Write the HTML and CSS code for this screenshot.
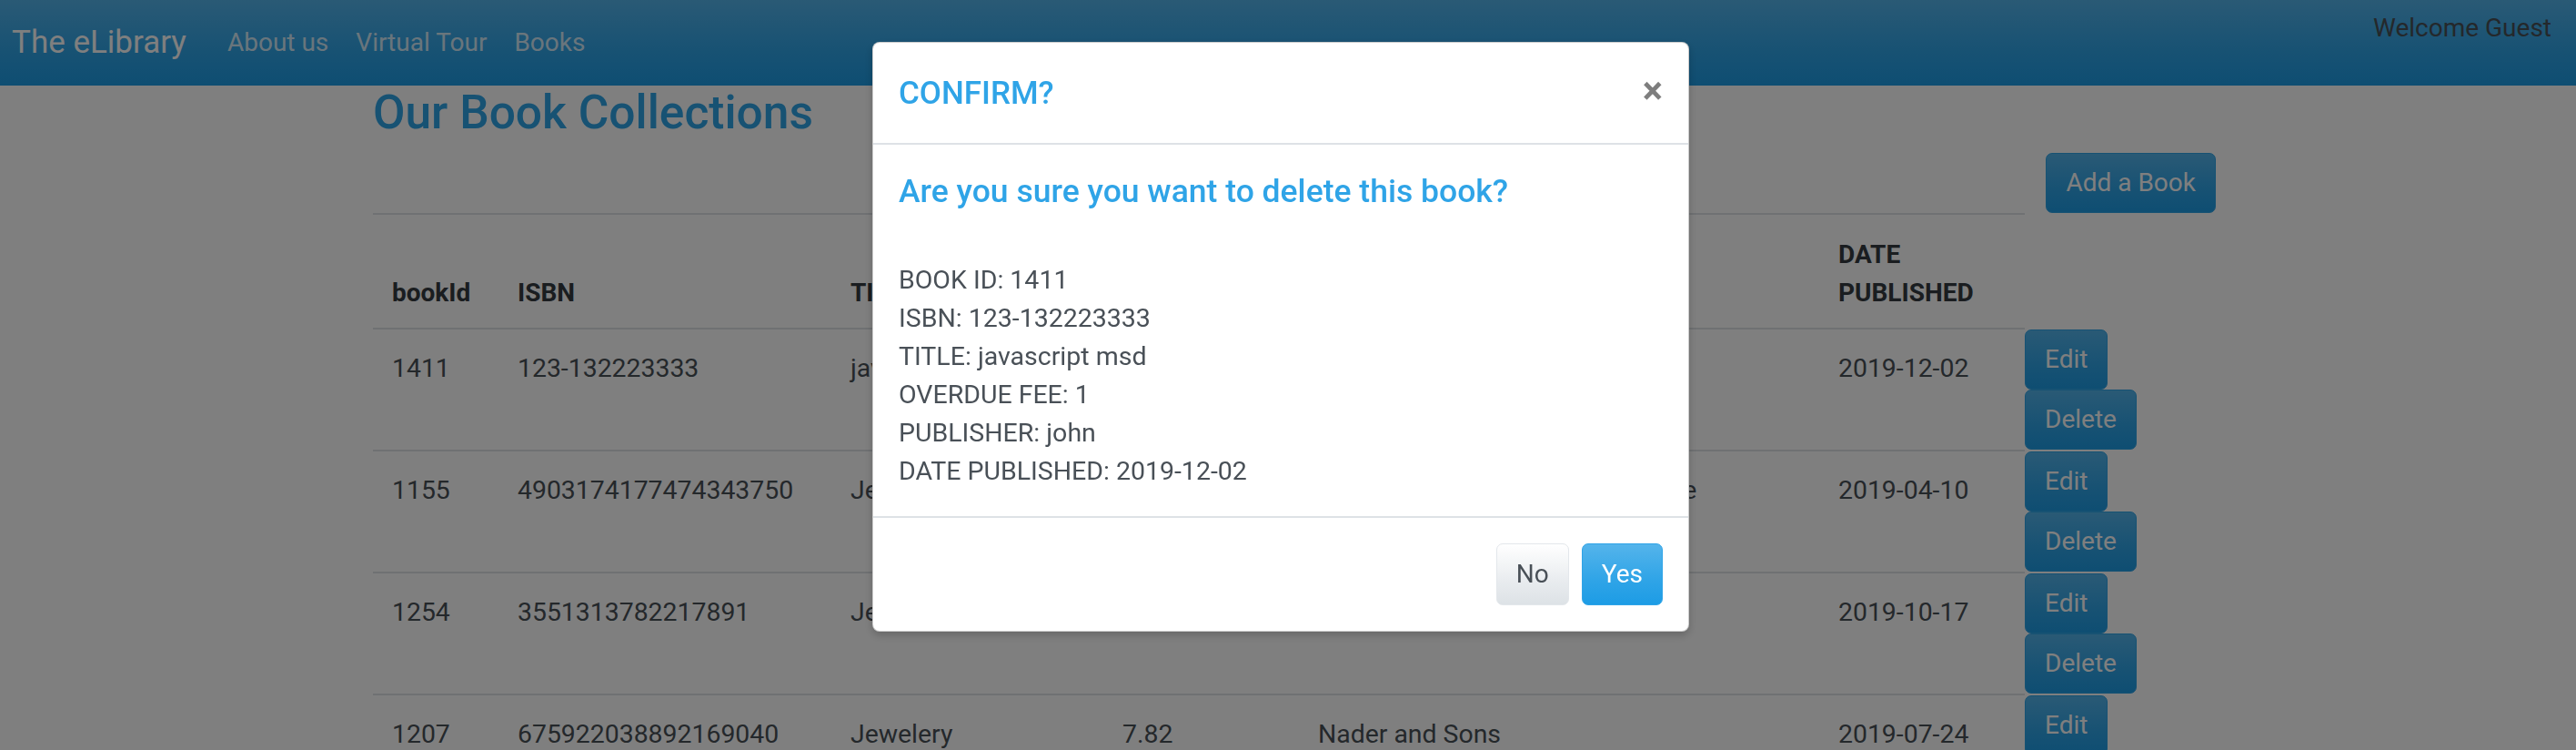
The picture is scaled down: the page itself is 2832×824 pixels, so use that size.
FILE: index.html
```html
<!DOCTYPE html>
<html lang="en">
<head>
<meta charset="utf-8">
<title>The eLibrary - Books</title>
<link rel="stylesheet" href="styles.css">
</head>
<body>
  <nav class="navbar">
    <a class="brand" href="#">The eLibrary</a>
    <ul class="nav">
      <li><a class="nav-link" href="#">About us</a></li>
      <li><a class="nav-link" href="#">Virtual Tour</a></li>
      <li><a class="nav-link" href="#">Books</a></li>
    </ul>
    <span class="welcome">Welcome Guest</span>
  </nav>

  <main class="page">
    <h3 class="page-title">Our Book Collections</h3>
    <div class="toolbar">
      <button class="btn btn-primary">Add a Book</button>
    </div>
    <table class="books">
      <colgroup>
        <col class="c-id"><col class="c-isbn"><col class="c-title"><col class="c-fee"><col class="c-pub"><col class="c-date"><col class="c-act">
      </colgroup>
      <thead>
        <tr>
          <th>bookId</th>
          <th>ISBN</th>
          <th>TITLE</th>
          <th>OVERDUE FEE</th>
          <th>PUBLISHER</th>
          <th>DATE PUBLISHED</th>
          <th class="actions"></th>
        </tr>
      </thead>
      <tbody>
        <tr>
          <td>1411</td>
          <td>123-132223333</td>
          <td>javascript msd</td>
          <td>1</td>
          <td>john</td>
          <td>2019-12-02</td>
          <td class="actions"><div class="stack"><button class="btn btn-primary">Edit</button><button class="btn btn-primary">Delete</button></div></td>
        </tr>
        <tr>
          <td>1155</td>
          <td>4903174177474343750</td>
          <td>Jewelery</td>
          <td>3.45</td>
          <td>Hermiston, Shanahan and Lemke</td>
          <td>2019-04-10</td>
          <td class="actions"><div class="stack"><button class="btn btn-primary">Edit</button><button class="btn btn-primary">Delete</button></div></td>
        </tr>
        <tr>
          <td>1254</td>
          <td>3551313782217891</td>
          <td>Jewelery</td>
          <td>9.12</td>
          <td>Lind LLC</td>
          <td>2019-10-17</td>
          <td class="actions"><div class="stack"><button class="btn btn-primary">Edit</button><button class="btn btn-primary">Delete</button></div></td>
        </tr>
        <tr>
          <td>1207</td>
          <td>675922038892169040</td>
          <td>Jewelery</td>
          <td>7.82</td>
          <td>Nader and Sons</td>
          <td>2019-07-24</td>
          <td class="actions"><div class="stack"><button class="btn btn-primary">Edit</button><button class="btn btn-primary">Delete</button></div></td>
        </tr>
      </tbody>
    </table>
  </main>

  <div class="backdrop"></div>

  <div class="modal">
    <div class="modal-dialog">
      <div class="modal-content">
        <div class="modal-header">
          <h5 class="modal-title">CONFIRM?</h5>
          <button class="close" aria-label="Close">&times;</button>
        </div>
        <div class="modal-body">
          <h5 class="question">Are you sure you want to delete this book?</h5>
          <div class="details">
            <div>BOOK ID: 1411</div>
            <div>ISBN: 123-132223333</div>
            <div>TITLE: javascript msd</div>
            <div>OVERDUE FEE: 1</div>
            <div>PUBLISHER: john</div>
            <div>DATE PUBLISHED: 2019-12-02</div>
          </div>
        </div>
        <div class="modal-footer">
          <button class="btn btn-secondary">No</button>
          <button class="btn btn-primary">Yes</button>
        </div>
      </div>
    </div>
  </div>
</body>
</html>
```

FILE: styles.css
```css
html, body {
  margin: 0;
  padding: 0;
  overflow: hidden;
  height: 100%;
}

body {
  background: #fff;
  color: #495057;
  font-family: Roboto, "Liberation Sans", Arial, sans-serif;
  font-size: 28px;
  line-height: 42px;
}

/* ---------- navbar ---------- */
.navbar {
  display: flex;
  align-items: center;
  height: 94px;
  padding: 0 27px 0 13px;
  background-image: linear-gradient(#54b4eb, #2fa4e7 60%, #1d9ce5);
  box-sizing: border-box;
}

.brand {
  color: #fff;
  font-size: 35px;
  line-height: 52px;
  text-decoration: none;
  margin-right: 30px;
}

.nav {
  display: flex;
  list-style: none;
  margin: 0;
  padding: 0;
}

.nav-link {
  display: block;
  padding: 0 15px;
  color: rgba(255, 255, 255, 0.8);
  text-decoration: none;
}

.welcome {
  margin-left: auto;
  align-self: flex-start;
  margin-top: 10px;
  color: #495057;
}

/* ---------- page ---------- */
.page {
  margin-left: 410px;
}

.page-title {
  margin: 0 0 14px;
  color: #2fa4e7;
  font-size: 51.5px;
  font-weight: 500;
  line-height: 60px;
}

.toolbar {
  display: flex;
  justify-content: flex-end;
  width: 2026px;
}

/* ---------- buttons ---------- */
.btn {
  font-family: inherit;
  font-size: 28px;
  line-height: 42px;
  padding: 11px 21px;
  border: 1px solid transparent;
  border-radius: 7px;
  cursor: pointer;
  white-space: nowrap;
}

.btn-primary {
  color: #fff;
  background-image: linear-gradient(#54b4eb, #2fa4e7 60%, #1d9ce5);
  border-color: #2fa4e7;
}

.btn-secondary {
  color: #495057;
  background-image: linear-gradient(#fff, #e9ecef 60%, #dde2e6);
  border-color: #e3e7eb;
}

/* ---------- table ---------- */
.books {
  table-layout: fixed;
  width: 1946px;
  border-collapse: separate;
  border-spacing: 0;
}

.c-id { width: 138px; }
.c-isbn { width: 366px; }
.c-title { width: 299px; }
.c-fee { width: 215px; }
.c-pub { width: 572px; }
.c-date { width: 226px; }
.c-act { width: 130px; }

.books th {
  text-align: left;
  vertical-align: bottom;
  font-weight: 700;
  padding: 23px 21px 17px;
  border-top: 2px solid #dee2e6;
  border-bottom: 2px solid #dee2e6;
  color: #343a40;
}

.books td {
  vertical-align: top;
  padding: 22px 21px 20px;
  border-bottom: 2px solid #dee2e6;
  white-space: nowrap;
  font-size: 28.4px;
}

.books th.actions,
.books td.actions {
  padding: 0;
  border-color: transparent;
}

.stack {
  display: flex;
  flex-direction: column;
  align-items: flex-start;
}

/* ---------- modal ---------- */
.backdrop {
  position: fixed;
  inset: 0;
  background: rgba(0, 0, 0, 0.5);
}

.modal {
  position: fixed;
  inset: 0;
  padding-right: 16px;
}

.modal-dialog {
  width: 898px;
  margin: 46px auto 0;
}

.modal-content {
  background: #fff;
  border: 1px solid rgba(0, 0, 0, 0.2);
  border-radius: 8px;
  box-shadow: 0 4px 10px rgba(0, 0, 0, 0.2);
}

.modal-header {
  display: flex;
  align-items: flex-start;
  padding: 30px 28px 28px;
  border-bottom: 2px solid #dee2e6;
}

.modal-title {
  margin: 0;
  color: #2fa4e7;
  font-size: 35px;
  font-weight: 500;
  line-height: 52px;
}

.close {
  margin: -30px -28px -28px auto;
  padding: 32px 28px 26px;
  background: transparent;
  border: 0;
  font-family: inherit;
  font-size: 42px;
  font-weight: 700;
  line-height: 1;
  color: #000;
  opacity: 0.5;
  text-shadow: 0 1px 0 #fff;
}

.modal-body {
  padding: 30px 28px 28px;
}

.question {
  margin: 0 0 14px;
  color: #2fa4e7;
  font-size: 35.5px;
  font-weight: 500;
  line-height: 42px;
}

.details {
  margin-top: 56px;
  font-size: 28.5px;
}

.modal-footer {
  display: flex;
  justify-content: flex-end;
  align-items: center;
  padding: 21px;
  border-top: 2px solid #dee2e6;
}

.modal-footer .btn {
  margin: 7px;
  padding: 12px 21px;
}
```
